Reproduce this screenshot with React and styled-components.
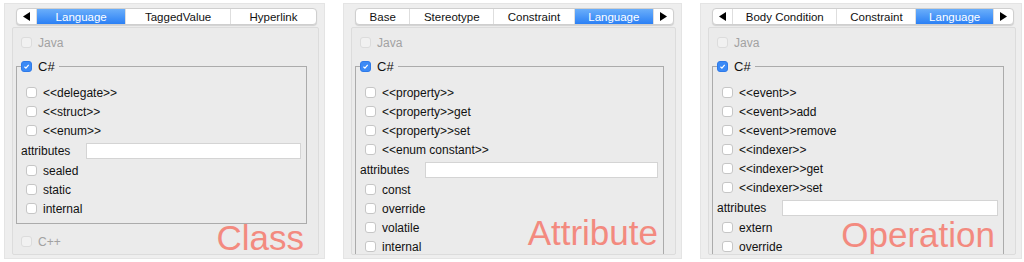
import React from "react";
import styled, { createGlobalStyle } from "styled-components";

const GlobalStyle = createGlobalStyle`
  body {
    margin: 0;
    background: #ffffff;
    font-family: "Liberation Sans", Arial, sans-serif;
  }
`;

const panels = [
  {
    width: 321,
    tabs: ["Language", "TaggedValue", "Hyperlink"],
    leftArrow: true,
    rightArrow: false,
    stereotypes: ["<<delegate>>", "<<struct>>", "<<enum>>"],
    modifiers: ["sealed", "static", "internal"],
    cpp: true,
    label: "Class",
    labelRight: 20,
    labelBottom: 3,
  },
  {
    width: 339,
    tabs: ["Base", "Stereotype", "Constraint", "Language"],
    leftArrow: false,
    rightArrow: true,
    stereotypes: ["<<property>>", "<<property>>get", "<<property>>set", "<<enum constant>>"],
    modifiers: ["const", "override", "volatile", "internal"],
    cpp: false,
    label: "Attribute",
    labelRight: 23,
    labelBottom: 8,
  },
  {
    width: 322,
    tabs: ["Body Condition", "Constraint", "Language"],
    leftArrow: true,
    rightArrow: true,
    stereotypes: [
      "<<event>>",
      "<<event>>add",
      "<<event>>remove",
      "<<indexer>>",
      "<<indexer>>get",
      "<<indexer>>set",
    ],
    modifiers: ["extern", "override"],
    cpp: false,
    label: "Operation",
    labelRight: 26,
    labelBottom: 6,
  },
];

function Arrow({ dir }) {
  return (
    <ArrowTab>
      <svg width="7" height="9" viewBox="0 0 7 9">
        {dir === "left" ? (
          <path d="M7 0 L0 4.5 L7 9 Z" fill="#000" />
        ) : (
          <path d="M0 0 L7 4.5 L0 9 Z" fill="#000" />
        )}
      </svg>
    </ArrowTab>
  );
}

function Check({ checked, disabled, label, strong }) {
  return (
    <CheckRow>
      <Box $checked={checked} $disabled={disabled}>
        {checked && (
          <svg width="11" height="11" viewBox="0 0 11 11">
            <path d="M3 5.8 L4.8 7.6 L8.2 3.4" stroke="#fff" strokeWidth="1.4" fill="none" />
          </svg>
        )}
      </Box>
      <CheckText $disabled={disabled} $strong={strong}>
        {label}
      </CheckText>
    </CheckRow>
  );
}

function Panel({ p }) {
  return (
    <Outer $width={p.width}>
      <TabBar>
        {p.leftArrow && <Arrow dir="left" />}
        {p.tabs.map((t) => (
          <Tab key={t} $active={t === "Language"}>
            {t}
          </Tab>
        ))}
        {p.rightArrow && <Arrow dir="right" />}
      </TabBar>
      <Content>
        <Indent>
          <Check disabled label="Java" />
        </Indent>
        <Group>
          <Legend>
            <Check checked label="C#" strong />
          </Legend>
          {p.stereotypes.map((s) => (
            <Indent key={s}>
              <Check label={s} />
            </Indent>
          ))}
          <AttrRow>
            <AttrLabel>attributes</AttrLabel>
            <AttrInput />
          </AttrRow>
          {p.modifiers.map((m) => (
            <Indent key={m}>
              <Check label={m} />
            </Indent>
          ))}
        </Group>
        {p.cpp && (
          <CppRow>
            <Check disabled label="C++" />
          </CppRow>
        )}
      </Content>
      <BigLabel $right={p.labelRight} $bottom={p.labelBottom}>
        {p.label}
      </BigLabel>
    </Outer>
  );
}

export default function App() {
  return (
    <>
      <GlobalStyle />
      <Page>
        {panels.map((p) => (
          <Panel key={p.label} p={p} />
        ))}
      </Page>
    </>
  );
}

const Page = styled.div`
  display: flex;
  gap: 18px;
  padding: 3px 0 0 4px;
`;

const Outer = styled.div`
  position: relative;
  box-sizing: border-box;
  width: ${(p) => p.$width}px;
  height: 256px;
  background: #eeeeee;
  border: 1px solid #e4e4e4;
  padding: 4px 5px 3px 7px;
  display: flex;
  flex-direction: column;
  gap: 2px;
`;

const TabBar = styled.div`
  display: flex;
  height: 17px;
  box-sizing: border-box;
  margin: 0 2px 0 4px;
  background: #ffffff;
  border: 1px solid #cfcfcf;
  border-radius: 4px;
  box-shadow: 0 1px 1px rgba(0, 0, 0, 0.12);
  overflow: hidden;
`;

const Tab = styled.div`
  flex: 1 1 auto;
  display: flex;
  align-items: center;
  justify-content: center;
  font-size: 11.5px;
  white-space: nowrap;
  color: ${(p) => (p.$active ? "#ffffff" : "#111111")};
  background: ${(p) => (p.$active ? "linear-gradient(#6aaefa, #2b80f5)" : "transparent")};
  border-left: 1px solid #dedede;

  &:first-child {
    border-left: none;
  }
`;

const ArrowTab = styled.div`
  flex: 0 0 19px;
  display: flex;
  align-items: center;
  justify-content: center;
  border-left: 1px solid #dedede;

  &:first-child {
    border-left: none;
  }
`;

const Content = styled.div`
  box-sizing: border-box;
  height: 228px;
  background: #ebebeb;
  border: 1px solid #dcdcdc;
  border-radius: 2px;
  padding: 5px 11px 0 3px;
  overflow: hidden;
`;

const Indent = styled.div`
  padding-left: 5px;
`;

const CppRow = styled.div`
  padding-left: 5px;
  margin-top: 8px;
`;

const CheckRow = styled.div`
  display: flex;
  align-items: center;
  gap: 6px;
  height: 19px;
`;

const Box = styled.span`
  box-sizing: border-box;
  width: 11px;
  height: 11px;
  flex: 0 0 11px;
  border-radius: 3px;
  display: flex;
  align-items: center;
  justify-content: center;
  background: ${(p) => (p.$checked ? "#3b8af6" : p.$disabled ? "#f1f1f1" : "#ffffff")};
  border: 1px solid
    ${(p) => (p.$checked ? "#2f7ae8" : p.$disabled ? "#dcdcdc" : "#c6c6c6")};
`;

const CheckText = styled.span`
  white-space: nowrap;
  color: ${(p) => (p.$disabled ? "#a2a2a2" : "#111111")};
  font-size: ${(p) => (p.$strong ? "13px" : "12px")};
`;

const Group = styled.fieldset`
  margin: 5px 0 0 0;
  border: 1px solid #ababab;
  padding: 7px 5px 5px 4px;
  min-width: 0;
`;

const Legend = styled.legend`
  padding: 0 4px 0 0;
`;

const AttrRow = styled.div`
  display: flex;
  align-items: center;
  height: 21px;
`;

const AttrLabel = styled.span`
  flex: 0 0 65px;
  font-size: 12px;
  color: #111111;
`;

const AttrInput = styled.div`
  flex: 1;
  height: 16px;
  box-sizing: border-box;
  background: #ffffff;
  border: 1px solid #d4d4d4;
`;

const BigLabel = styled.div`
  position: absolute;
  right: ${(p) => p.$right}px;
  bottom: ${(p) => p.$bottom}px;
  font-size: 35px;
  line-height: 35px;
  color: #f38a7f;
  pointer-events: none;
`;
